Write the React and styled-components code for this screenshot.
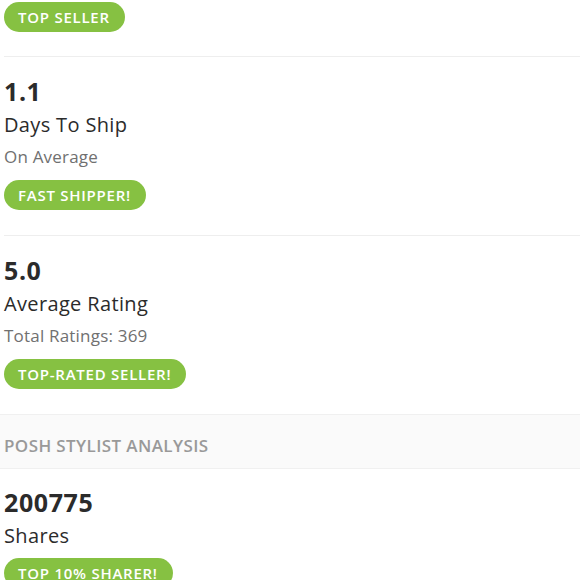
import React from "react";
import styled, { createGlobalStyle } from "styled-components";

const GlobalStyle = createGlobalStyle`
  html, body {
    margin: 0;
    padding: 0;
    background: #fff;
    font-family: "Open Sans", "Liberation Sans", sans-serif;
    color: #2b2b2b;
    overflow: hidden;
  }
`;

const Page = styled.div`
  width: 580px;
  height: 580px;
  overflow: hidden;
`;

const Section = styled.div`
  margin-left: 4px;
  padding: ${(props) => props.pad || "19px 0 25px"};
  border-top: ${(props) => (props.first ? "none" : "1px solid #eeeeee")};
`;

const Value = styled.div`
  font-size: 25px;
  line-height: 30px;
  font-weight: 700;
  letter-spacing: 0.6px;
`;

const Label = styled.div`
  margin-top: 6px;
  font-size: 20px;
  line-height: 26px;
  font-weight: 500;
  letter-spacing: 0.35px;
`;

const Sub = styled.div`
  margin-top: 8px;
  font-size: 17px;
  line-height: 22px;
  letter-spacing: 0.2px;
  color: #707070;
`;

const Badge = styled.span`
  display: inline-flex;
  align-items: center;
  height: 30px;
  margin-top: ${(props) => props.mt || "12px"};
  padding: 0 15px 0 14px;
  border-radius: 15px;
  background: #86c142;
  color: #fff;
  font-size: 15px;
  font-weight: 600;
  text-transform: uppercase;
  letter-spacing: 0.75px;
`;

const Band = styled.div`
  height: 55px;
  box-sizing: border-box;
  display: flex;
  align-items: center;
  padding: 7px 4px 0;
  background: #fafafa;
  border-top: 1px solid #f0f0f0;
  border-bottom: 1px solid #f0f0f0;
  color: #999;
  font-size: 17px;
  font-weight: 600;
  text-transform: uppercase;
  letter-spacing: 0.4px;
`;

const BadgeBlock = styled.div``;

const stats = [
  { value: "1.1", label: "Days To Ship", sub: "On Average", badge: "Fast Shipper!" },
  { value: "5.0", label: "Average Rating", sub: "Total Ratings: 369", badge: "Top-Rated Seller!" },
];

export default function App() {
  return (
    <Page>
      <GlobalStyle />
      <Section first pad="2px 0 24px">
        <BadgeBlock>
          <Badge mt="0">Top Seller</Badge>
        </BadgeBlock>
      </Section>
      {stats.map((s) => (
        <Section key={s.label}>
          <Value>{s.value}</Value>
          <Label>{s.label}</Label>
          <Sub>{s.sub}</Sub>
          <BadgeBlock>
            <Badge>{s.badge}</Badge>
          </BadgeBlock>
        </Section>
      ))}
      <Band>Posh Stylist Analysis</Band>
      <Section first pad="18px 0 25px">
        <Value>200775</Value>
        <Label>Shares</Label>
        <BadgeBlock>
          <Badge mt="9px">Top 10% Sharer!</Badge>
        </BadgeBlock>
      </Section>
    </Page>
  );
}
